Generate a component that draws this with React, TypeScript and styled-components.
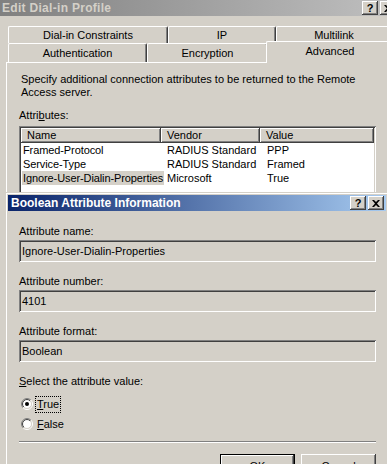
import { useId } from "react";
import styled, { createGlobalStyle } from "styled-components";

const GlobalStyle = createGlobalStyle`
  html, body {
    margin: 0;
    padding: 0;
    background: #d4d0c8;
    overflow: hidden;
  }
  body {
    font-family: "Liberation Sans", Arial, sans-serif;
    font-size: 11px;
    color: #000;
  }
`;

const Screen = styled.div`
  position: relative;
  width: 387px;
  height: 464px;
  overflow: hidden;
  background: #d4d0c8;
`;

// ---- parent window (Edit Dial-in Profile) ----

const ParentWindow = styled.div`
  width: 398px;
  display: flex;
  flex-direction: column;
`;

const TitleBar = styled.div<{ $active?: boolean }>`
  height: 16px;
  display: flex;
  align-items: center;
  justify-content: space-between;
  padding: 0 2px 0 ${(p) => (p.$active ? "3px" : "2px")};
  background: ${(p) =>
    p.$active
      ? "linear-gradient(to right, #0a246a, #a6caf0)"
      : "linear-gradient(to right, #808080, #c0c0c0)"};
  color: ${(p) => (p.$active ? "#ffffff" : "#d4d0c8")};
  font-weight: bold;
  font-size: 12px;
  letter-spacing: ${(p) => (p.$active ? "0" : "0.3px")};
  white-space: nowrap;
`;

const CaptionGroup = styled.div`
  display: flex;
  gap: 2px;
  letter-spacing: 0;
`;

const CaptionButton = styled.div`
  box-sizing: border-box;
  width: 16px;
  height: 14px;
  display: flex;
  align-items: center;
  justify-content: center;
  background: #d4d0c8;
  box-shadow: inset -1px -1px #404040, inset 1px 1px #ffffff,
    inset -2px -2px #808080;
  color: #000;
  font-weight: bold;
  font-size: 11px;
  line-height: 1;
`;

const ParentBody = styled.div`
  padding: 10px 6px 0 6px;
`;

const TabRow = styled.div<{ $front?: boolean }>`
  display: flex;
  align-items: flex-start;
  height: ${(p) => (p.$front ? "19px" : "17px")};
  padding-left: 2px;
`;

const Tab = styled.div<{ $w?: number; $selected?: boolean; $front?: boolean }>`
  box-sizing: border-box;
  position: relative;
  width: ${(p) => (p.$w ? `${p.$w}px` : "auto")};
  flex: ${(p) => (p.$w ? "none" : "1")};
  height: ${(p) => (p.$selected ? "22px" : p.$front ? "19px" : "17px")};
  margin: ${(p) => (p.$selected ? "-2px -2px 0 -2px" : "0")};
  padding-top: ${(p) => (p.$front ? "2px" : "1px")};
  z-index: ${(p) => (p.$selected ? 1 : 0)};
  background: #d4d0c8;
  border-top: 1px solid #ffffff;
  border-left: 1px solid #ffffff;
  border-right: 1px solid #404040;
  border-radius: 2px 2px 0 0;
  box-shadow: inset -1px 0 #808080;
  text-align: center;
  line-height: 15px;
  white-space: nowrap;
`;

const Panel = styled.div`
  border-top: 1px solid #ffffff;
  border-left: 1px solid #ffffff;
  padding: 10px 12px 0 12px;
  height: 420px;
`;

const Intro = styled.p`
  margin: 0 0 10px 2px;
  line-height: 13px;
`;

const FieldLabel = styled.div<{ $gap?: number; $top?: number }>`
  line-height: 13px;
  margin-top: ${(p) => p.$top ?? 0}px;
  margin-bottom: ${(p) => p.$gap ?? 2}px;
`;

const ListBox = styled.div`
  width: 357px;
  height: 120px;
  padding: 2px;
  box-sizing: border-box;
  background: #ffffff;
  box-shadow: inset 1px 1px #808080, inset -1px -1px #ffffff,
    inset 2px 2px #404040, inset -2px -2px #d4d0c8;
`;

const HeaderRow = styled.div`
  display: grid;
  grid-template-columns: 140px 99px 1fr;
  height: 15px;
`;

const HeaderCell = styled.div`
  box-sizing: border-box;
  padding-left: 6px;
  line-height: 15px;
  background: #d4d0c8;
  box-shadow: inset -1px -1px #404040, inset 1px 1px #ffffff,
    inset -2px -2px #808080;
`;

const ItemRow = styled.div`
  display: grid;
  grid-template-columns: 140px 99px 1fr;
  height: 14px;
  line-height: 14px;
  white-space: nowrap;
  &:first-of-type {
    margin-top: 1px;
  }
`;

const Cell = styled.div<{ $pad?: number }>`
  padding-left: ${(p) => p.$pad ?? 6}px;
  overflow: visible;
`;

const NameText = styled.span<{ $selected?: boolean }>`
  display: inline-block;
  padding: 0 1px;
  letter-spacing: -0.1px;
  background: ${(p) => (p.$selected ? "#d4d0c8" : "transparent")};
`;

// ---- child dialog (Boolean Attribute Information) ----

const Dialog = styled.div`
  position: absolute;
  left: 5px;
  top: 192px;
  width: 384px;
  height: 290px;
  box-sizing: border-box;
  padding: 2px;
  background: #d4d0c8;
  border: 1px solid;
  border-color: #d4d0c8 #404040 #404040 #d4d0c8;
  box-shadow: inset 1px 1px #ffffff, inset -1px -1px #808080;
`;

const DialogBody = styled.div`
  padding: 14px 10px 0 11px;
`;

const TextBox = styled.div`
  box-sizing: border-box;
  height: 22px;
  line-height: 22px;
  padding-left: 3px;
  margin-bottom: 13px;
  background: #d4d0c8;
  box-shadow: inset 1px 1px #808080, inset -1px -1px #ffffff,
    inset 2px 2px #404040, inset -2px -2px #d4d0c8;
`;

const RadioRow = styled.div`
  display: flex;
  align-items: center;
  height: 20px;
  padding-left: 2px;
  gap: 3px;
`;

const RadioLabel = styled.span<{ $focused?: boolean }>`
  padding: 1px 1px;
  line-height: 13px;
  outline: ${(p) => (p.$focused ? "1px dotted #000" : "none")};
  outline-offset: 0;
`;

const Separator = styled.div`
  margin-top: 7px;
  height: 2px;
  box-sizing: border-box;
  border-top: 1px solid #808080;
  border-bottom: 1px solid #ffffff;
`;

const ButtonRow = styled.div`
  display: flex;
  justify-content: flex-end;
  gap: 6px;
  margin-top: 11px;
`;

const PushButton = styled.div<{ $default?: boolean }>`
  box-sizing: border-box;
  width: 75px;
  height: 23px;
  display: flex;
  align-items: center;
  justify-content: center;
  background: #d4d0c8;
  border: ${(p) => (p.$default ? "1px solid #000" : "none")};
  box-shadow: inset -1px -1px #404040, inset 1px 1px #ffffff,
    inset -2px -2px #808080;
`;

const CloseGlyph = () => (
  <svg width="8" height="7" viewBox="0 0 8 7">
    <path d="M0 0h2l2 2 2-2h2L5 3.5 8 7H6L4 5 2 7H0l3-3.5z" fill="#000" />
  </svg>
);

const Radio = ({ checked }: { checked?: boolean }) => {
  const id = useId().replace(/:/g, "");
  return (
    <svg width="12" height="12" viewBox="0 0 12 12">
      <defs>
        <linearGradient id={`o${id}`} x1="0" y1="0" x2="1" y2="1">
          <stop offset="0.5" stopColor="#808080" />
          <stop offset="0.5" stopColor="#ffffff" />
        </linearGradient>
        <linearGradient id={`i${id}`} x1="0" y1="0" x2="1" y2="1">
          <stop offset="0.5" stopColor="#404040" />
          <stop offset="0.5" stopColor="#d4d0c8" />
        </linearGradient>
      </defs>
      <circle cx="6" cy="6" r="5.5" fill="none" stroke={`url(#o${id})`} />
      <circle cx="6" cy="6" r="4.5" fill="#ffffff" stroke={`url(#i${id})`} />
      {checked && <circle cx="6" cy="6" r="2" fill="#000" />}
    </svg>
  );
};

const attributes = [
  { name: "Framed-Protocol", vendor: "RADIUS Standard", value: "PPP" },
  { name: "Service-Type", vendor: "RADIUS Standard", value: "Framed" },
  {
    name: "Ignore-User-Dialin-Properties",
    vendor: "Microsoft",
    value: "True",
    selected: true,
  },
];

const App = () => {
  return (
    <Screen>
      <GlobalStyle />
      <ParentWindow>
        <TitleBar>
          <span>Edit Dial-in Profile</span>
          <CaptionGroup>
            <CaptionButton>?</CaptionButton>
            <CaptionButton>
              <CloseGlyph />
            </CaptionButton>
          </CaptionGroup>
        </TitleBar>
        <ParentBody>
          <TabRow>
            <Tab $w={160}>Dial-in Constraints</Tab>
            <Tab $w={108}>IP</Tab>
            <Tab>Multilink</Tab>
          </TabRow>
          <TabRow $front>
            <Tab $w={139} $front>
              Authentication
            </Tab>
            <Tab $w={121} $front>
              Encryption
            </Tab>
            <Tab $front $selected>
              Advanced
            </Tab>
          </TabRow>
          <Panel>
            <Intro>
              Specify additional connection attributes to be returned to the
              Remote Access server.
            </Intro>
            <FieldLabel $gap={4}>
              Attri<u>b</u>utes:
            </FieldLabel>
            <ListBox>
              <HeaderRow>
                <HeaderCell>Name</HeaderCell>
                <HeaderCell>Vendor</HeaderCell>
                <HeaderCell>Value</HeaderCell>
              </HeaderRow>
              {attributes.map((a) => (
                <ItemRow key={a.name}>
                  <Cell $pad={1}>
                    <NameText $selected={a.selected}>{a.name}</NameText>
                  </Cell>
                  <Cell>{a.vendor}</Cell>
                  <Cell $pad={7}>{a.value}</Cell>
                </ItemRow>
              ))}
            </ListBox>
          </Panel>
        </ParentBody>
      </ParentWindow>

      <Dialog>
        <TitleBar $active>
          <span>Boolean Attribute Information</span>
          <CaptionGroup>
            <CaptionButton>?</CaptionButton>
            <CaptionButton>
              <CloseGlyph />
            </CaptionButton>
          </CaptionGroup>
        </TitleBar>
        <DialogBody>
          <FieldLabel>Attribute name:</FieldLabel>
          <TextBox>Ignore-User-Dialin-Properties</TextBox>
          <FieldLabel>Attribute number:</FieldLabel>
          <TextBox>4101</TextBox>
          <FieldLabel>Attribute format:</FieldLabel>
          <TextBox>Boolean</TextBox>
          <FieldLabel $top={2} $gap={6}>
            <u>S</u>elect the attribute value:
          </FieldLabel>
          <RadioRow>
            <Radio checked />
            <RadioLabel $focused>
              <u>T</u>rue
            </RadioLabel>
          </RadioRow>
          <RadioRow>
            <Radio />
            <RadioLabel>
              <u>F</u>alse
            </RadioLabel>
          </RadioRow>
          <Separator />
          <ButtonRow>
            <PushButton $default>OK</PushButton>
            <PushButton>Cancel</PushButton>
          </ButtonRow>
        </DialogBody>
      </Dialog>
    </Screen>
  );
};

export default App;
